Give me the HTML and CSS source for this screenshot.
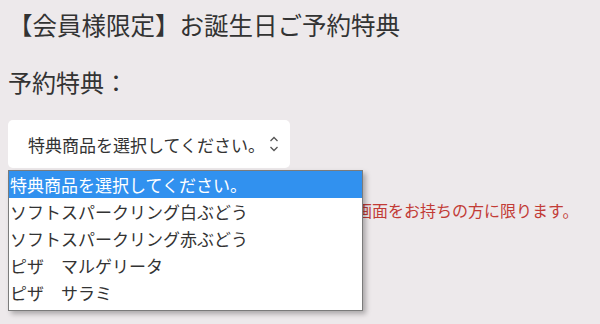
FILE: index.html
```html
<!DOCTYPE html>
<html lang="ja">
<head>
  <meta charset="UTF-8" />
  <meta name="viewport" content="width=device-width, initial-scale=1" />
  <title>お誕生日ご予約特典</title>
  <link rel="stylesheet" href="styles.css">
</head>
<body>

<main class="page">
  <h1 class="title">【会員様限定】お誕生日ご予約特典</h1>

  <form class="form">
    <label class="field-label" for="tokuten">予約特典：</label>

    <div class="select-wrap">
      <div class="select-box" id="tokuten" role="combobox" aria-expanded="true" aria-controls="tokutenList">
        <span class="select-text">特典商品を選択してください。</span>
        <svg class="select-arrow" width="10" height="20" viewBox="0 0 10 20" aria-hidden="true">
          <path d="M1.5 7 L5 3.5 L8.5 7" />
          <path d="M1.5 13 L5 16.5 L8.5 13" />
        </svg>
      </div>

      <ul class="dropdown" id="tokutenList" role="listbox">
        <li class="option selected" role="option" aria-selected="true">特典商品を選択してください。</li>
        <li class="option" role="option">ソフトスパークリング白ぶどう</li>
        <li class="option" role="option">ソフトスパークリング赤ぶどう</li>
        <li class="option" role="option">ピザ　マルゲリータ</li>
        <li class="option" role="option">ピザ　サラミ</li>
      </ul>
    </div>

    <p class="notice">
      ※特典のご利用は、ご来店時にアプリの会員証画面をお持ちの方に限ります。<br>
      ※他の特典・クーポンとの併用はできません。
    </p>
  </form>
</main>

</body>
</html>
```

FILE: styles.css
```css
* {
  margin: 0; padding: 0; box-sizing: border-box;
}
body {
  font-family: "Noto Sans CJK JP", "Noto Sans", sans-serif;
  background: #ede9eb;
  color: #333;
}

.page {
  min-height: 100vh;
  padding: 7px 8px 0;
}
.title {
  font-size: 24.5px;
  font-weight: 400;
  line-height: 36px;
  color: #333;
}

.form {
  margin-top: 22px;
}
.field-label {
  display: block;
  font-size: 24px;
  line-height: 34px;
  color: #333;
}

.select-wrap {
  position: relative;
  margin-top: 21px;
}
.select-box {
  width: 282px;
  height: 48px;
  background: #fff;
  border-radius: 5px;
  display: flex;
  align-items: center;
  padding: 0 8px 0 20px;
  gap: 4px;
}
.select-text {
  font-size: 17px;
  color: #333;
  white-space: nowrap;
}
.select-arrow {
  fill: none;
  stroke: #555;
  stroke-width: 1.3;
}

/* ネイティブのドロップダウン風リスト */
.dropdown {
  position: absolute;
  top: 50px;
  left: 0;
  width: 355px;
  list-style: none;
  background: #fff;
  border: 1px solid #7b7b7b;
  padding-bottom: 4px;
  box-shadow: 3px 3px 5px rgba(0,0,0,0.28);
  z-index: 10;
}
.option {
  height: 27px;
  line-height: 27px;
  font-size: 17px;
  color: #333;
  padding-left: 1px;
  white-space: nowrap;
}
.option.selected {
  background: #3191ef;
  color: #fff;
}

.notice {
  margin-top: 29px;
  font-size: 16px;
  line-height: 27px;
  color: #c23b36;
  padding-left: 12px;
}
```
